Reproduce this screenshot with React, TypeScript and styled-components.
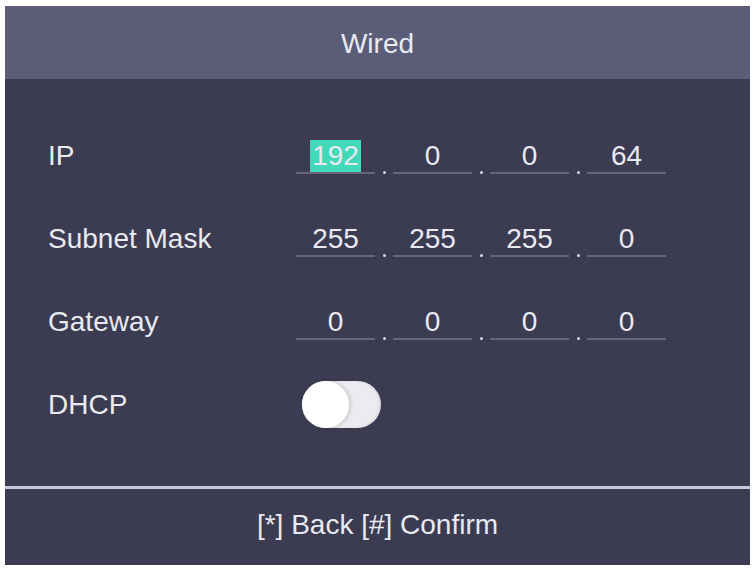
import React from "react";
import styled, { createGlobalStyle } from "styled-components";

const GlobalStyle = createGlobalStyle`
  html, body { margin: 0; padding: 0; background: #ffffff; }
  body { font-family: "Liberation Sans", Arial, sans-serif; }
`;

const Panel = styled.div`
  margin: 6px 4px 0 5px;
  width: 745px;
  height: 559px;
  display: flex;
  flex-direction: column;
  background: #3b3b51;
  color: #e9e9f0;
  font-size: 28px;
`;

const Header = styled.div`
  height: 73px;
  display: flex;
  align-items: center;
  justify-content: center;
  background: #5a5c78;
  padding-top: 2px;
  box-sizing: border-box;
`;

const Body = styled.div`
  flex: 1;
  padding: 35px 0 0 43px;
  display: grid;
  grid-template-columns: 248px auto;
  grid-auto-rows: 83px;
  align-content: start;
`;

const Label = styled.div`
  display: flex;
  align-items: center;
`;

const Fields = styled.div`
  display: flex;
  align-items: center;
`;

const Field = styled.div`
  width: 79px;
  height: 35px;
  box-sizing: border-box;
  border-bottom: 2px solid #65667c;
  display: flex;
  align-items: center;
  justify-content: center;
  margin-top: 2px;
`;

const Value = styled.span<{ $active?: boolean }>`
  line-height: 32px;
  padding: 0 2px;
  background: ${(p) => (p.$active ? "#40dab8" : "transparent")};
  color: #e9e9f0;
`;

const Dot = styled.div`
  width: 18px;
  height: 35px;
  margin-top: 2px;
  display: flex;
  align-items: flex-end;
  justify-content: center;
  &::after {
    content: "";
    width: 3px;
    height: 3px;
    border-radius: 50%;
    background: #d8d8e2;
    margin-bottom: 0;
  }
`;

const Toggle = styled.div`
  margin-left: 6px;
  width: 79px;
  height: 47px;
  border-radius: 24px;
  background: #ececf0;
  display: flex;
  align-items: center;
  box-shadow: inset -2px 0 3px rgba(0, 0, 0, 0.08);
`;

const Knob = styled.div`
  width: 47px;
  height: 47px;
  border-radius: 50%;
  background: #ffffff;
  box-shadow: 2px 0 4px rgba(0, 0, 0, 0.14);
`;

const Divider = styled.div`
  height: 3px;
  background: #c9c9da;
`;

const Footer = styled.div`
  height: 76px;
  display: flex;
  align-items: center;
  justify-content: center;
  padding-bottom: 4px;
  box-sizing: border-box;
`;

const rows: { label: string; values: string[] }[] = [
  { label: "IP", values: ["192", "0", "0", "64"] },
  { label: "Subnet Mask", values: ["255", "255", "255", "0"] },
  { label: "Gateway", values: ["0", "0", "0", "0"] },
];

export default function App() {
  return (
    <>
      <GlobalStyle />
      <Panel>
        <Header>Wired</Header>
        <Body>
          {rows.map((r, ri) => (
            <React.Fragment key={r.label}>
              <Label>{r.label}</Label>
              <Fields>
                {r.values.map((v, i) => (
                  <React.Fragment key={i}>
                    {i > 0 && <Dot />}
                    <Field>
                      <Value $active={ri === 0 && i === 0}>{v}</Value>
                    </Field>
                  </React.Fragment>
                ))}
              </Fields>
            </React.Fragment>
          ))}
          <Label>DHCP</Label>
          <Fields>
            <Toggle>
              <Knob />
            </Toggle>
          </Fields>
        </Body>
        <Divider />
        <Footer>[*] Back [#] Confirm</Footer>
      </Panel>
    </>
  );
}
